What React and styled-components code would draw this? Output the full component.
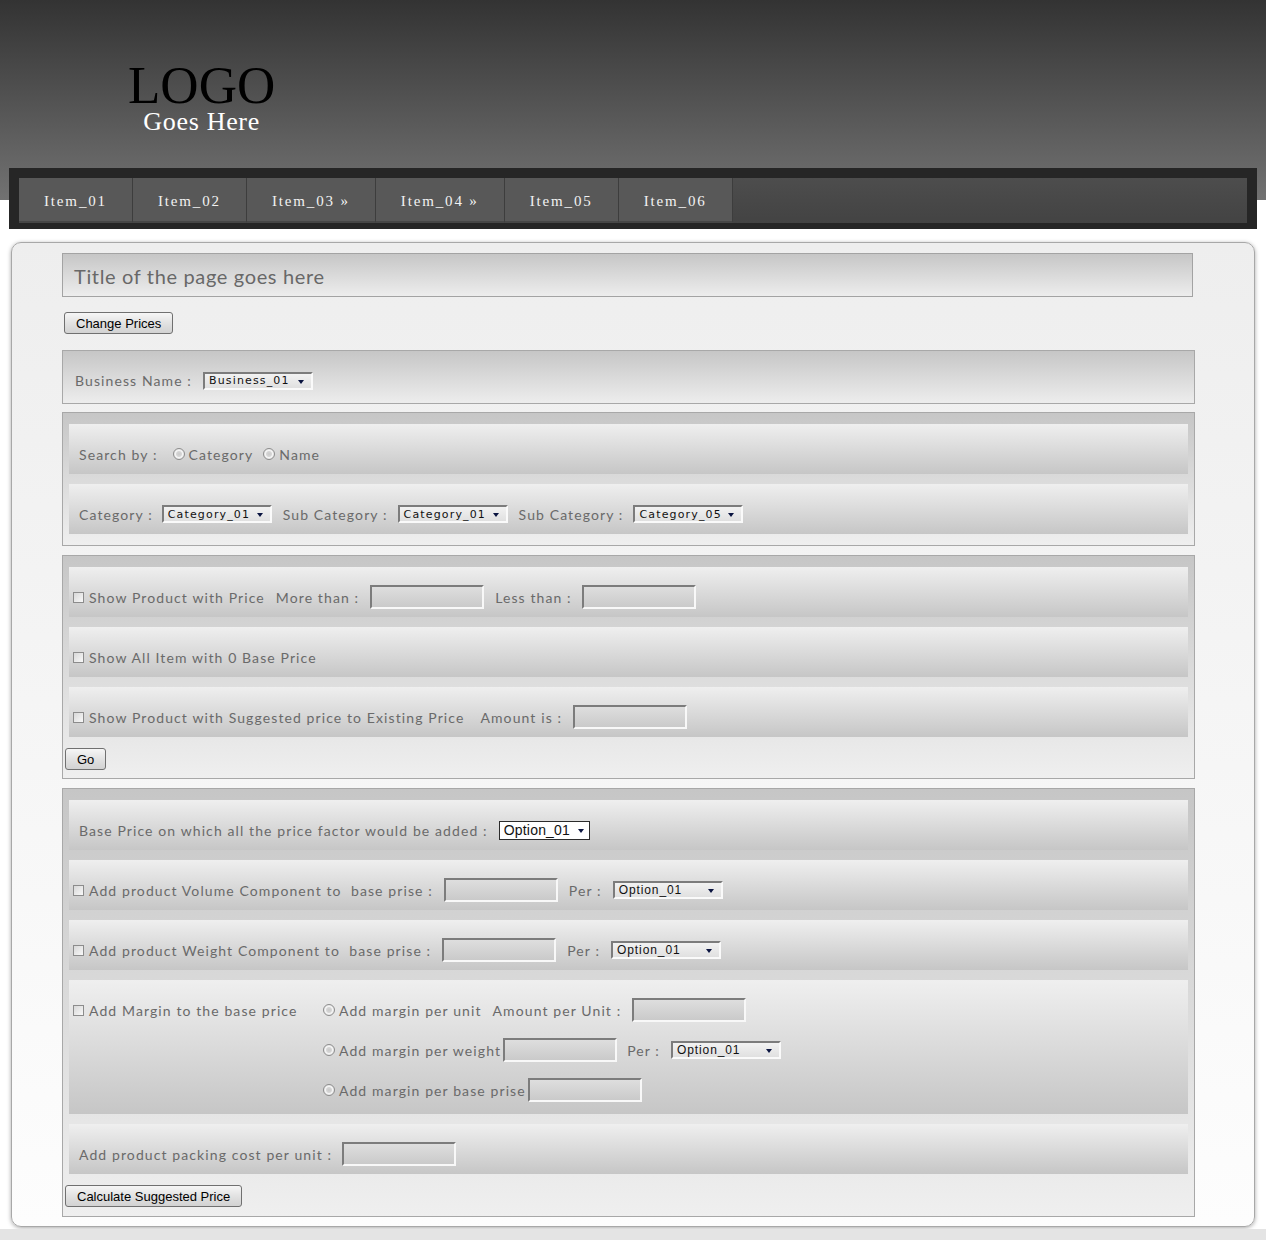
import React from "react";
import styled, { createGlobalStyle } from "styled-components";

const GlobalStyle = createGlobalStyle`
  html, body {
    margin: 0;
    padding: 0;
  }
  body {
    background: #e4e4e4;
    font-family: Lato, "Liberation Sans", sans-serif;
  }
`;

const Page = styled.div`
  background: linear-gradient(to bottom, #333333 0, #727272 200px, #ffffff 200px);
  padding-bottom: 2px;
`;

const Header = styled.header`
  height: 168px;
  box-sizing: border-box;
  padding: 61px 0 0 128px;
`;

const Logo = styled.div`
  display: inline-flex;
  flex-direction: column;
  align-items: center;
  font-family: "Liberation Serif", serif;
`;

const LogoMain = styled.div`
  font-size: 53px;
  line-height: 48px;
  color: #000;
`;

const LogoSub = styled.div`
  font-size: 26px;
  line-height: 26px;
  letter-spacing: 0.7px;
  color: #fff;
`;

const NavFrame = styled.nav`
  margin: 0 9px;
  background: #262626;
  padding: 10px 10px 6px;
`;

const NavStrip = styled.ul`
  display: flex;
  margin: 0;
  padding: 0;
  list-style: none;
  height: 45px;
  background: linear-gradient(to bottom, #4d4d4d, #434343);
`;

const NavItem = styled.li`
  display: flex;
  align-items: center;
  padding: 3px 25px 0;
  background: #585858;
  border-right: 1px solid #3d3d3d;
  border-bottom: 2px solid #474747;
  font-family: "Liberation Serif", serif;
  font-size: 15px;
  letter-spacing: 1.85px;
  color: #f2f2f2;
`;

const Panel = styled.main`
  margin: 13px 11px 0;
  border: 1px solid #a8a8a8;
  border-radius: 10px;
  background: linear-gradient(to bottom, #eeeeee, #fdfdfd);
  box-shadow: 0 1px 4px rgba(0, 0, 0, 0.35);
  padding: 10px 59px 9px 50px;
`;

const TitleBox = styled.div`
  height: 40px;
  margin-right: 2px;
  border: 1px solid #a3a3a3;
  background: linear-gradient(to bottom, #c6c6c6, #ededed);
  display: flex;
  align-items: center;
  padding: 2px 11px 0;
  font-size: 20px;
  letter-spacing: 0.65px;
  color: #686868;
`;

const Button = styled.button`
  display: block;
  align-self: flex-start;
  height: 22px;
  padding: 0 11px;
  margin: ${(p) => p.$margin || "0"};
  border: 1px solid #707070;
  border-radius: 3px;
  background: linear-gradient(to bottom, #f6f6f6, #e2e2e2 50%, #d2d2d2);
  font-family: "Liberation Sans", Arial, sans-serif;
  font-size: 13px;
  color: #000;
`;

const BusinessBox = styled.div`
  margin-top: 16px;
  box-sizing: content-box;
  border: 1px solid #a8a8a8;
  background: linear-gradient(to bottom, #c6c6c6, #ededed);
  display: flex;
  align-items: center;
  padding: 7px 12px 0;
  height: 45px;
`;

const Group = styled.section`
  margin-top: ${(p) => p.$top || 8}px;
  border: 1px solid #a8a8a8;
  background: linear-gradient(to bottom, #c6c6c6, #efefef);
  padding: 11px 6px ${(p) => p.$bottom || 8}px;
  display: flex;
  flex-direction: column;
  gap: 10px;
`;

const Row = styled.div`
  display: flex;
  align-items: center;
  height: 40px;
  padding: 10px 0 0 ${(p) => p.$indent || 10}px;
  background: linear-gradient(to bottom, #efefef, #c6c6c6);
`;

const MarginRow = styled.div`
  display: grid;
  grid-template-columns: 250px auto;
  padding: 10px 0 4px 4px;
  background: linear-gradient(to bottom, #efefef, #c6c6c6);
`;

const Line = styled.div`
  display: flex;
  align-items: center;
  height: 40px;
`;

const Label = styled.span`
  margin-left: ${(p) => p.$ml || 0}px;
  font-size: 14px;
  letter-spacing: 1.1px;
  color: #6a6a6a;
  white-space: pre;
`;

const Check = styled.input.attrs({ type: "checkbox" })`
  appearance: none;
  margin: 0 5px 0 0;
  width: 11px;
  height: 11px;
  border: 1px solid #8c8c8c;
  background: linear-gradient(to bottom right, #d8d8d8, #f8f8f8);
  box-sizing: border-box;
`;

const Radio = styled.input.attrs({ type: "radio" })`
  appearance: none;
  margin: 0 4px 0 ${(p) => p.$ml || 0}px;
  width: 12px;
  height: 12px;
  border-radius: 50%;
  border: 1px solid #8c8c8c;
  background: radial-gradient(circle, #c9c9c9 0, #d6d6d6 2.5px, #f5f5f5 3.5px, #e6e6e6 5px);
  box-sizing: border-box;
`;

const TextInput = styled.input.attrs({ type: "text" })`
  margin: 0 0 0 ${(p) => p.$ml || 0}px;
  width: 114px;
  height: 24px;
  box-sizing: border-box;
  border: 2px solid;
  border-color: #7c7c7c #f8f8f8 #f8f8f8 #7c7c7c;
  background: linear-gradient(to bottom, #dedede, #cacaca);
  padding: 0 4px;
`;

const SelectBox = styled.span`
  position: relative;
  display: inline-flex;
  align-items: center;
  box-sizing: border-box;
  margin-left: ${(p) => p.$ml || 0}px;
  width: ${(p) => p.$w || 110}px;
  height: ${(p) => (p.$plain ? 19 : 18)}px;
  padding-left: 4px;
  border: 2px solid;
  border-width: ${(p) => (p.$plain ? 1 : 2)}px;
  border-color: ${(p) => (p.$plain ? "#2b2b2b" : "#7c7c7c #fafafa #fafafa #7c7c7c")};
  background: ${(p) => (p.$plain ? "#ffffff" : "linear-gradient(to bottom, #f2f2f2, #e0e0e0)")};
  font-family: ${(p) =>
    p.$narrow ? '"Liberation Sans Narrow", "Liberation Sans", sans-serif' : '"DejaVu Sans", Verdana, sans-serif'};
  font-size: ${(p) => (p.$narrow ? (p.$plain ? 14 : 12) : 11)}px;
  letter-spacing: ${(p) => (p.$narrow ? (p.$plain ? 0.2 : 0.9) : 1.15)}px;
  color: #111;
  white-space: nowrap;
  &::after {
    content: "";
    position: absolute;
    right: ${(p) => (p.$plain ? 5 : 7)}px;
    top: 50%;
    margin-top: -1px;
    border-left: 3.5px solid transparent;
    border-right: 3.5px solid transparent;
    border-top: 4px solid #0a1440;
  }
`;

const navItems = ["Item_01", "Item_02", "Item_03 »", "Item_04 »", "Item_05", "Item_06"];

export default function App() {
  return (
    <Page>
      <GlobalStyle />
      <Header>
        <Logo>
          <LogoMain>LOGO</LogoMain>
          <LogoSub>Goes Here</LogoSub>
        </Logo>
      </Header>
      <NavFrame>
        <NavStrip>
          {navItems.map((item) => (
            <NavItem key={item}>{item}</NavItem>
          ))}
        </NavStrip>
      </NavFrame>

      <Panel>
        <TitleBox>Title of the page goes here</TitleBox>
        <Button $margin="15px 0 0 2px">Change Prices</Button>

        <BusinessBox>
          <Label>Business Name :</Label>
          <SelectBox $ml={11}>Business_01</SelectBox>
        </BusinessBox>

        <Group $bottom={11}>
          <Row>
            <Label>Search by :</Label>
            <Radio $ml={15} name="searchby" />
            <Label>Category</Label>
            <Radio $ml={10} name="searchby" />
            <Label>Name</Label>
          </Row>
          <Row>
            <Label>Category :</Label>
            <SelectBox $ml={9}>Category_01</SelectBox>
            <Label $ml={11}>Sub Category :</Label>
            <SelectBox $ml={10}>Category_01</SelectBox>
            <Label $ml={11}>Sub Category :</Label>
            <SelectBox $ml={10}>Category_05</SelectBox>
          </Row>
        </Group>

        <Group $top={9}>
          <Row $indent={4}>
            <Check />
            <Label>Show Product with Price</Label>
            <Label $ml={11}>More than :</Label>
            <TextInput $ml={11} />
            <Label $ml={11}>Less than :</Label>
            <TextInput $ml={10} />
          </Row>
          <Row $indent={4}>
            <Check />
            <Label>Show All Item with 0 Base Price</Label>
          </Row>
          <Row $indent={4}>
            <Check />
            <Label>Show Product with Suggested price to Existing Price</Label>
            <Label $ml={16}>Amount is :</Label>
            <TextInput $ml={11} />
          </Row>
          <Button $margin="1px 0 0 -4px">Go</Button>
        </Group>

        <Group $top={9} $bottom={9}>
          <Row>
            <Label>Base Price on which all the price factor would be added :</Label>
            <SelectBox $plain $narrow $w={91} $ml={11}>
              Option_01
            </SelectBox>
          </Row>
          <Row $indent={4}>
            <Check />
            <Label>Add product Volume Component to  base prise :</Label>
            <TextInput $ml={11} />
            <Label $ml={11}>Per :</Label>
            <SelectBox $narrow $ml={11}>Option_01</SelectBox>
          </Row>
          <Row $indent={4}>
            <Check />
            <Label>Add product Weight Component to  base prise :</Label>
            <TextInput $ml={11} />
            <Label $ml={11}>Per :</Label>
            <SelectBox $narrow $ml={11}>Option_01</SelectBox>
          </Row>
          <MarginRow>
            <Line>
              <Check />
              <Label>Add Margin to the base price</Label>
            </Line>
            <Line>
              <Radio name="margin" />
              <Label>Add margin per unit</Label>
              <Label $ml={11}>Amount per Unit :</Label>
              <TextInput $ml={11} />
            </Line>
            <span />
            <Line>
              <Radio name="margin" />
              <Label>Add margin per weight</Label>
              <TextInput $ml={2} />
              <Label $ml={10}>Per :</Label>
              <SelectBox $narrow $ml={11}>Option_01</SelectBox>
            </Line>
            <span />
            <Line>
              <Radio name="margin" />
              <Label>Add margin per base prise</Label>
              <TextInput $ml={2} />
            </Line>
          </MarginRow>
          <Row>
            <Label>Add product packing cost per unit :</Label>
            <TextInput $ml={10} />
          </Row>
          <Button $margin="1px 0 0 -4px">Calculate Suggested Price</Button>
        </Group>
      </Panel>
    </Page>
  );
}
